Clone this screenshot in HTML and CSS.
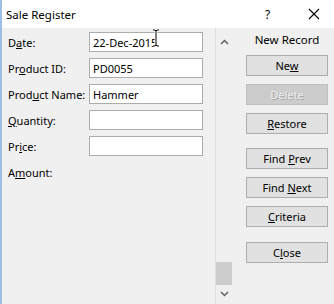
FILE: index.html
```html
<!DOCTYPE html>
<html lang="en">
  <head>
    <meta charset="UTF-8" />
    <title>Sale Register</title>
    <link rel="stylesheet" href="styles.css">
  </head>
  <body>
    <div class="window">
      <div class="titlebar">
        <span class="title">Sale Register</span>
        <span class="help">?</span>
        <svg class="close-x" width="12" height="12" viewBox="0 0 12 12">
          <path d="M1 1 L11 11 M11 1 L1 11" stroke="#000" stroke-width="1.1" fill="none" />
        </svg>
      </div>

      <div class="content">
        <div class="fields">
          <div class="row">
            <label>D<u>a</u>te:</label>
            <div class="field">
              <input type="text" value="22-Dec-2015" />
              <svg class="ibeam" width="8" height="18" viewBox="0 0 8 18">
                <path d="M1 1 H3 L4 2 L5 1 H7 M4 2 V16 M1 17 H3 L4 16 L5 17 H7" stroke="#fff" stroke-width="3" fill="none" />
                <path d="M1 1 H3 L4 2 L5 1 H7 M4 2 V16 M1 17 H3 L4 16 L5 17 H7" stroke="#000" stroke-width="1" fill="none" />
              </svg>
            </div>
          </div>
          <div class="row">
            <label>Pr<u>o</u>duct ID:</label>
            <div class="field"><input type="text" value="PD0055" /></div>
          </div>
          <div class="row">
            <label>Prod<u>u</u>ct Name:</label>
            <div class="field"><input type="text" value="Hammer" /></div>
          </div>
          <div class="row">
            <label><u>Q</u>uantity:</label>
            <div class="field"><input type="text" value="" /></div>
          </div>
          <div class="row">
            <label>Pr<u>i</u>ce:</label>
            <div class="field"><input type="text" value="" /></div>
          </div>
          <div class="row">
            <label>A<u>m</u>ount:</label>
          </div>
        </div>

        <div class="scrollbar">
          <div class="arrow">
            <svg width="9" height="6" viewBox="0 0 9 6"><path d="M1 5 L4.5 1.5 L8 5" stroke="#606060" stroke-width="1.5" fill="none" /></svg>
          </div>
          <div class="track"></div>
          <div class="thumb"></div>
          <div class="arrow">
            <svg width="9" height="6" viewBox="0 0 9 6"><path d="M1 1 L4.5 4.5 L8 1" stroke="#606060" stroke-width="1.5" fill="none" /></svg>
          </div>
        </div>

        <div class="actions">
          <div class="record">New Record</div>
          <button>Ne<u>w</u></button>
          <button class="disabled">Delete</button>
          <button><u>R</u>estore</button>
          <button class="group">Find <u>P</u>rev</button>
          <button>Find <u>N</u>ext</button>
          <button><u>C</u>riteria</button>
          <button class="group last">C<u>l</u>ose</button>
        </div>
      </div>
    </div>
  </body>
</html>
```

FILE: styles.css
```css
* {
  margin: 0;
  padding: 0;
  box-sizing: border-box;
}

body {
  font-family: "Noto Sans", "Open Sans", sans-serif;
  font-size: 11px;
  color: #000;
  background: #f0f0f0;
}

.window {
  width: 334px;
  height: 304px;
  display: flex;
  flex-direction: column;
  border-left: 2px solid #9dbfe6;
  background: #f0f0f0;
  overflow: hidden;
}

.titlebar {
  height: 28px;
  flex: 0 0 28px;
  background: #fff;
  display: flex;
  align-items: center;
  padding-left: 4px;
}

.title {
  font-size: 11.5px;
  flex: 1;
}

.help {
  font-size: 12px;
  width: 12px;
  margin-right: 31px;
}

.close-x {
  margin-right: 14px;
}

.content {
  flex: 1;
  display: flex;
}

.fields {
  width: 213px;
  padding: 4px 0 0 6px;
  display: flex;
  flex-direction: column;
  gap: 6px;
}

.row {
  display: flex;
  align-items: center;
  height: 20px;
}

.row label {
  width: 81px;
  flex: 0 0 81px;
}

.field {
  position: relative;
}

.field input {
  width: 114px;
  height: 20px;
  border: 1px solid #acacac;
  background: #fff;
  font-family: inherit;
  font-size: 11px;
  padding: 0 3px;
  color: #000;
}

.ibeam {
  position: absolute;
  left: 63px;
  top: -3px;
}

.scrollbar {
  width: 18px;
  border-left: 1px solid #dedede;
  display: flex;
  flex-direction: column;
  padding: 5px 0 2px 0;
}

.arrow {
  height: 17px;
  display: flex;
  align-items: center;
  justify-content: center;
}

.track {
  flex: 1;
}

.thumb {
  height: 23px;
  margin: 0 1px 0 0;
  background: #cdcdcd;
}

.actions {
  width: 82px;
  margin-left: 13px;
  padding-top: 5px;
  display: flex;
  flex-direction: column;
  gap: 8px;
}

.record {
  height: 14px;
  line-height: 14px;
  text-align: center;
  font-size: 11.5px;
}

.actions button {
  height: 21px;
  border: 1px solid #adadad;
  background: #e1e1e1;
  font-family: inherit;
  font-size: 11px;
  color: #000;
}

.actions button.disabled {
  background: #cccccc;
  border-color: #bfbfbf;
  color: #ededed;
  text-shadow: 1px 1px 0 #a9a9a9;
}

.actions button.group {
  margin-top: 6px;
}

.actions button.last {
  margin-top: 7px;
}
```
